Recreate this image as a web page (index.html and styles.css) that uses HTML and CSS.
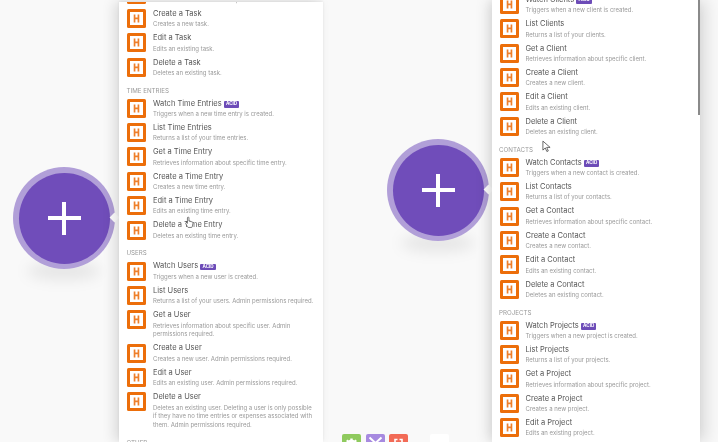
FILE: index.html
```html
<!DOCTYPE html>
<html lang="en">
<head>
<meta charset="utf-8">
<title>Harvest modules</title>
<link rel="stylesheet" href="styles.css">
</head>
<body>
<svg class="defs" width="0" height="0" aria-hidden="true">
  <symbol id="h" viewBox="0 0 19 19">
    <rect x="0" y="0" width="19" height="19" rx="1.5" fill="#ec6e0a"/>
    <rect x="3" y="3" width="13" height="13" fill="#fff"/>
    <path d="M6.7 5.4h1.7v3.2h2.2V5.4h1.7v8.2h-1.7v-3.4H8.4v3.4H6.7z" fill="#ee7f2a"/>
  </symbol>
</svg>
<main class="page">
  <section class="scene scene-left">
    <div class="bubble"><span class="bubble-inner"><span class="plus"></span></span><span class="pointer"></span></div>
    <div class="panel">
      <div class="list">
        <div class="row"><svg class="icon"><use href="#h"/></svg><div class="text"><div class="title">Get a Task</div><div class="desc">Retrieves information about specific task.</div></div></div>
        <div class="row"><svg class="icon"><use href="#h"/></svg><div class="text"><div class="title">Create a Task</div><div class="desc">Creates a new task.</div></div></div>
        <div class="row"><svg class="icon"><use href="#h"/></svg><div class="text"><div class="title">Edit a Task</div><div class="desc">Edits an existing task.</div></div></div>
        <div class="row"><svg class="icon"><use href="#h"/></svg><div class="text"><div class="title">Delete a Task</div><div class="desc">Deletes an existing task.</div></div></div>
        <div class="heading">TIME ENTRIES</div>
        <div class="row"><svg class="icon"><use href="#h"/></svg><div class="text"><div class="title">Watch Time Entries <span class="badge">ACID</span></div><div class="desc">Triggers when a new time entry is created.</div></div></div>
        <div class="row"><svg class="icon"><use href="#h"/></svg><div class="text"><div class="title">List Time Entries</div><div class="desc">Returns a list of your time entries.</div></div></div>
        <div class="row"><svg class="icon"><use href="#h"/></svg><div class="text"><div class="title">Get a Time Entry</div><div class="desc">Retrieves information about specific time entry.</div></div></div>
        <div class="row"><svg class="icon"><use href="#h"/></svg><div class="text"><div class="title">Create a Time Entry</div><div class="desc">Creates a new time entry.</div></div></div>
        <div class="row"><svg class="icon"><use href="#h"/></svg><div class="text"><div class="title">Edit a Time Entry</div><div class="desc">Edits an existing time entry.</div></div></div>
        <div class="row"><svg class="icon"><use href="#h"/></svg><div class="text"><div class="title">Delete a Time Entry</div><div class="desc">Deletes an existing time entry.</div></div></div>
        <div class="heading">USERS</div>
        <div class="row"><svg class="icon"><use href="#h"/></svg><div class="text"><div class="title">Watch Users <span class="badge">ACID</span></div><div class="desc">Triggers when a new user is created.</div></div></div>
        <div class="row"><svg class="icon"><use href="#h"/></svg><div class="text"><div class="title">List Users</div><div class="desc">Returns a list of your users. Admin permissions required.</div></div></div>
        <div class="row"><svg class="icon"><use href="#h"/></svg><div class="text"><div class="title">Get a User</div><div class="desc">Retrieves information about specific user. Admin permissions required.</div></div></div>
        <div class="row"><svg class="icon"><use href="#h"/></svg><div class="text"><div class="title">Create a User</div><div class="desc">Creates a new user. Admin permissions required.</div></div></div>
        <div class="row"><svg class="icon"><use href="#h"/></svg><div class="text"><div class="title">Edit a User</div><div class="desc">Edits an existing user. Admin permissions required.</div></div></div>
        <div class="row"><svg class="icon"><use href="#h"/></svg><div class="text"><div class="title">Delete a User</div><div class="desc">Deletes an existing user. Deleting a user is only possible if they have no time entries or expenses associated with them. Admin permissions required.</div></div></div>
        <div class="heading">OTHER</div>
      </div>
    </div>
    <svg class="cursor cursor-left" viewBox="0 0 10 14"><path d="M3 1.2c.8-.5 1.4 0 1.4.8v3.4l3.2.8c1 .3 1.4.9 1.2 1.9l-.6 3.2c-.1.7-.5 1.2-1.2 1.2H4c-.6 0-1-.3-1.3-.8L.8 8.2c-.4-.8.6-1.5 1.3-.9l.6.7V2c0-.4.1-.6.3-.8z" fill="#fff" stroke="#333" stroke-width=".7"/></svg>
  </section>
  <section class="scene scene-right">
    <div class="bubble"><span class="bubble-inner"><span class="plus"></span></span><span class="pointer"></span></div>
    <div class="toolbar">
      <span class="tool tool-green"><svg viewBox="0 0 19 19"><circle cx="9.5" cy="11" r="4.2" fill="none" stroke="#fff" stroke-width="2.4"/><path d="M8.3 4.5h2.4v2.4H8.3zM4 7l1.6-1.6 1.8 1.8-1.6 1.6zM15 7l-1.6-1.6-1.8 1.8 1.6 1.6z" fill="#fff"/></svg></span>
      <span class="tool tool-purple"><svg viewBox="0 0 19 19"><path d="M3.5 3.5l12 11M15.5 3.5l-12 11" stroke="#fff" stroke-width="2" fill="none"/></svg></span>
      <span class="tool tool-red"><svg viewBox="0 0 19 19"><path d="M6 9V5.5h2.5M13 9V5.5h-2.5" stroke="#fff" stroke-width="1.6" fill="none"/></svg></span>
      <span class="tool tool-white">+</span>
    </div>
    <div class="panel">
      <div class="list">
        <div class="row"><svg class="icon"><use href="#h"/></svg><div class="text"><div class="title">Watch Clients <span class="badge">ACID</span></div><div class="desc">Triggers when a new client is created.</div></div></div>
        <div class="row"><svg class="icon"><use href="#h"/></svg><div class="text"><div class="title">List Clients</div><div class="desc">Returns a list of your clients.</div></div></div>
        <div class="row"><svg class="icon"><use href="#h"/></svg><div class="text"><div class="title">Get a Client</div><div class="desc">Retrieves information about specific client.</div></div></div>
        <div class="row"><svg class="icon"><use href="#h"/></svg><div class="text"><div class="title">Create a Client</div><div class="desc">Creates a new client.</div></div></div>
        <div class="row"><svg class="icon"><use href="#h"/></svg><div class="text"><div class="title">Edit a Client</div><div class="desc">Edits an existing client.</div></div></div>
        <div class="row"><svg class="icon"><use href="#h"/></svg><div class="text"><div class="title">Delete a Client</div><div class="desc">Deletes an existing client.</div></div></div>
        <div class="heading">CONTACTS</div>
        <div class="row"><svg class="icon"><use href="#h"/></svg><div class="text"><div class="title">Watch Contacts <span class="badge">ACID</span></div><div class="desc">Triggers when a new contact is created.</div></div></div>
        <div class="row"><svg class="icon"><use href="#h"/></svg><div class="text"><div class="title">List Contacts</div><div class="desc">Returns a list of your contacts.</div></div></div>
        <div class="row"><svg class="icon"><use href="#h"/></svg><div class="text"><div class="title">Get a Contact</div><div class="desc">Retrieves information about specific contact.</div></div></div>
        <div class="row"><svg class="icon"><use href="#h"/></svg><div class="text"><div class="title">Create a Contact</div><div class="desc">Creates a new contact.</div></div></div>
        <div class="row"><svg class="icon"><use href="#h"/></svg><div class="text"><div class="title">Edit a Contact</div><div class="desc">Edits an existing contact.</div></div></div>
        <div class="row"><svg class="icon"><use href="#h"/></svg><div class="text"><div class="title">Delete a Contact</div><div class="desc">Deletes an existing contact.</div></div></div>
        <div class="heading">PROJECTS</div>
        <div class="row"><svg class="icon"><use href="#h"/></svg><div class="text"><div class="title">Watch Projects <span class="badge">ACID</span></div><div class="desc">Triggers when a new project is created.</div></div></div>
        <div class="row"><svg class="icon"><use href="#h"/></svg><div class="text"><div class="title">List Projects</div><div class="desc">Returns a list of your projects.</div></div></div>
        <div class="row"><svg class="icon"><use href="#h"/></svg><div class="text"><div class="title">Get a Project</div><div class="desc">Retrieves information about specific project.</div></div></div>
        <div class="row"><svg class="icon"><use href="#h"/></svg><div class="text"><div class="title">Create a Project</div><div class="desc">Creates a new project.</div></div></div>
        <div class="row"><svg class="icon"><use href="#h"/></svg><div class="text"><div class="title">Edit a Project</div><div class="desc">Edits an existing project.</div></div></div>
        <div class="row"><svg class="icon"><use href="#h"/></svg><div class="text"><div class="title">Delete a Project</div><div class="desc">Deletes an existing project.</div></div></div>
      </div>
      <div class="scrollbar"></div>
    </div>
    <svg class="cursor cursor-right" viewBox="0 0 10 14"><path d="M1 1v10l2.6-2.4 1.8 4 1.6-.7-1.8-3.9H9z" fill="#fff" stroke="#333" stroke-width=".8"/></svg>
  </section>
</main>
</body>
</html>
```
FILE: styles.css
```css
* { box-sizing: border-box; }
html, body { margin: 0; height: 100%; background: #f9f9f9; overflow: hidden; }
.defs { position: absolute; }
.page {
  display: flex;
  width: 718px;
  height: 442px;
  font-family: Inter, "Liberation Sans", sans-serif;
  filter: blur(0.42px);
}
.scene { position: relative; height: 442px; overflow: hidden; }
.scene-left { width: 330px; }
.scene-right { width: 388px; }
.panel {
  position: absolute;
  background: #fff;
  overflow: hidden;
}
.scene-left .panel { left: 119px; top: 2px; width: 204px; height: 440px; box-shadow: -5px 0 12px rgba(0,0,0,.12), 0 -1px 3px rgba(0,0,0,.08); }
.scene-right .panel { left: 162px; top: 0; width: 208px; height: 442px; box-shadow: -5px 0 12px rgba(0,0,0,.1), 5px 0 16px rgba(0,0,0,.14); }
.scene-left .list { margin-top: -20.2px; padding-left: 8px; }
.scene-right .list { margin-top: -7.8px; padding-left: 7.5px; }
.list { padding-right: 6px; }
.row { display: flex; gap: 7px; padding: 2.7px 0 1.45px; }
.icon { width: 19px; height: 19px; flex: none; margin-top: .1px; }
.text { flex: 1; min-width: 0; }
.title { font-size: 7.5px; line-height: 10px; color: #555; white-space: nowrap; }
.desc { font-size: 6px; line-height: 8.9px; color: #999; margin-top: 1.35px; }
.badge {
  display: inline-block;
  background: #6d4cb8;
  color: #fff;
  font-size: 4.6px;
  font-weight: 700;
  line-height: 6.5px;
  padding: 0 2.2px;
  border-radius: 1px;
  vertical-align: .5px;
}
.heading { font-size: 6.2px; line-height: 9px; color: #999; margin: 6.3px 0 1.3px -.5px; }
.bubble {
  position: absolute;
  width: 102px;
  height: 102px;
  border-radius: 50%;
  background: #b19fd8;
  display: flex;
  align-items: center;
  justify-content: center;
}
.bubble::after {
  content: "";
  position: absolute;
  left: 14px;
  right: 14px;
  bottom: -11px;
  height: 18px;
  border-radius: 50%;
  background: rgba(0,0,0,.08);
  filter: blur(7px);
  z-index: -1;
}
.scene-left .bubble { left: 13px; top: 167px; }
.scene-right .bubble { left: 57px; top: 139px; }
.bubble-inner {
  width: 91px;
  height: 91px;
  border-radius: 50%;
  background: #704dba;
  position: relative;
  display: block;
}
.plus { position: absolute; left: 29px; top: 29px; width: 33px; height: 33px;
  background:
    linear-gradient(#fff,#fff) center/33px 4px no-repeat,
    linear-gradient(#fff,#fff) center/4px 33px no-repeat; }
.pointer { position: absolute; right: -3px; top: 47px; width: 7px; height: 7px; background: #fff; transform: rotate(45deg); }
.toolbar { position: absolute; left: 12px; top: 434px; display: flex; gap: 4.5px; }
.tool { width: 19px; height: 19px; border-radius: 2px; display: block; }
.tool svg { display: block; width: 19px; height: 19px; }
.tool-green { background: #8fca5e; }
.tool-purple { background: #a78ae0; }
.tool-red { background: #f26b57; }
.tool-white { background: #fff; margin-left: 17px; font-size: 10px; line-height: 19px; text-align: center; color: #444; }
.scrollbar { position: absolute; right: 0; top: 0; width: 2.5px; height: 115px; background: #8a8a8a; }
.cursor { position: absolute; width: 9px; height: 13px; }
.cursor-left { left: 185px; top: 216px; }
.cursor-right { left: 212px; top: 140px; }
```
